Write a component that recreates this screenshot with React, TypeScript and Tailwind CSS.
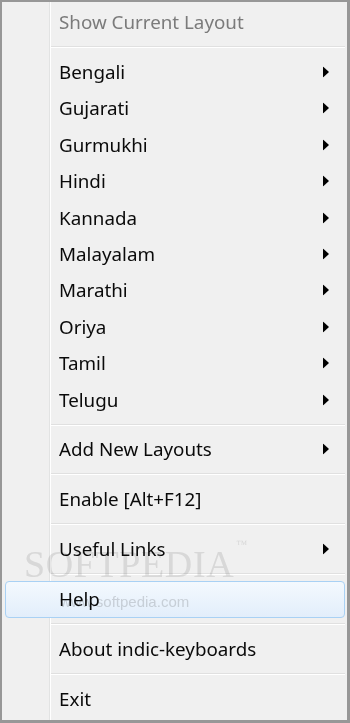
const languages = ['Bengali', 'Gujarati', 'Gurmukhi', 'Hindi', 'Kannada', 'Malayalam', 'Marathi', 'Oriya', 'Tamil', 'Telugu'];

function Arrow() {
  return (
    <svg width="6" height="11" viewBox="0 0 6 11" className="absolute right-[18px] top-1/2 -translate-y-1/2">
      <path d="M0 0 L6 5.5 L0 11 Z" fill="#000" />
    </svg>
  );
}

function Item({ label, sub, disabled, hot }: { label: string; sub?: boolean; disabled?: boolean; hot?: boolean }) {
  return (
    <div className="relative h-[36.4px] flex items-center">
      {hot && (
        <div className="absolute left-[3px] right-[2px] top-0 bottom-[-1px] rounded-[4px] border border-[#a9d1f4] bg-gradient-to-b from-[#f4f9fe] to-[#e2eefb]" />
      )}
      <span className={`relative pl-[57px] ${disabled ? 'text-[#7b7b7b]' : 'text-[#0a0a0a]'}`}>{label}</span>
      {sub && <Arrow />}
    </div>
  );
}

function Sep() {
  return (
    <div className="h-[13.5px] flex flex-col justify-center pl-[49px] pr-[2px]">
      <div className="h-px bg-[#e0e0e0]" />
      <div className="h-px bg-white" />
    </div>
  );
}

export default function App() {
  return (
    <div
      className="relative w-[350px] h-[723px] bg-[#f0f0f0] border-2 border-r-[3px] border-b-[3px] border-[#979797] overflow-hidden text-[18.8px]"
      style={{ fontFamily: '"Noto Sans", "Open Sans", sans-serif' }}
    >
      {/* gutter line */}
      <div className="absolute left-[47px] top-0 bottom-0 w-px bg-[#e2e3e3]" />
      <div className="absolute left-[48px] top-0 bottom-0 w-px bg-white" />

      <div className="relative flex flex-col pt-[2px]">
        <Item label="Show Current Layout" disabled />
        <Sep />
        {languages.map((l) => (
          <Item key={l} label={l} sub />
        ))}
        <Sep />
        <Item label="Add New Layouts" sub />
        <Sep />
        <Item label="Enable [Alt+F12]" />
        <Sep />
        <Item label="Useful Links" sub />
        <Sep />
        <Item label="Help" hot />
        <Sep />
        <Item label="About indic-keyboards" />
        <Sep />
        <Item label="Exit" />
      </div>

      {/* watermark */}
      <div
        className="pointer-events-none absolute left-[22px] top-[534px] text-[38px] tracking-[0.6px] text-[#e6e6e6] mix-blend-multiply"
        style={{ fontFamily: '"Liberation Serif", serif' }}
      >
        SOFTPEDIA<span className="text-[11px] align-top ml-[2px]">™</span>
      </div>
      <div
        className="pointer-events-none absolute left-[58px] top-[589px] text-[15px] text-[#dadada] mix-blend-multiply"
        style={{ fontFamily: '"Liberation Sans", sans-serif' }}
      >
        www.softpedia.com
      </div>
    </div>
  );
}
